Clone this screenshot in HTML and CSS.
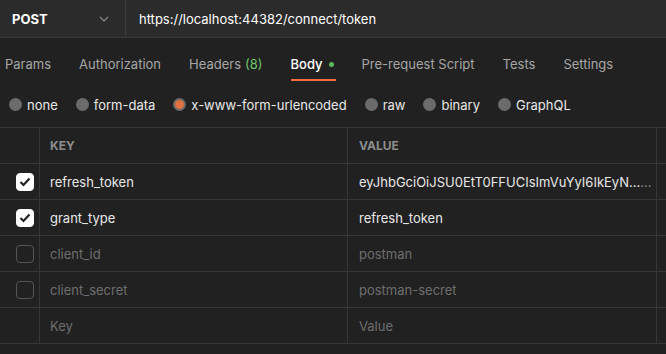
FILE: index.html
```html
<!DOCTYPE html>
<html>
<head>
<meta charset="utf-8">
<link rel="stylesheet" href="styles.css">
</head>
<body>
<div class="app">
  <div class="urlbar">
    <div class="method">
      <span class="method-name">POST</span>
      <svg class="chev" width="10" height="6" viewBox="0 0 10 6"><path d="M1 1l4 4 4-4" fill="none" stroke="#8a8a8a" stroke-width="1.2"/></svg>
    </div>
    <div class="url">https://localhost:44382/connect/token</div>
  </div>
  <div class="tabs">
    <span class="tab">Params</span>
    <span class="tab">Authorization</span>
    <span class="tab">Headers <span class="count">(8)</span></span>
    <span class="tab active">Body <span class="dot"></span></span>
    <span class="tab">Pre-request Script</span>
    <span class="tab">Tests</span>
    <span class="tab">Settings</span>
  </div>
  <div class="radios">
    <span class="radio"><span class="circle"></span>none</span>
    <span class="radio"><span class="circle"></span>form-data</span>
    <span class="radio"><span class="circle sel"></span>x-www-form-urlencoded</span>
    <span class="radio"><span class="circle"></span>raw</span>
    <span class="radio"><span class="circle"></span>binary</span>
    <span class="radio"><span class="circle"></span>GraphQL</span>
  </div>
  <div class="table">
    <div class="row head">
      <div class="c0"></div>
      <div class="c1">KEY</div>
      <div class="c2">VALUE</div>
      <div class="c3"></div>
    </div>
    <div class="row">
      <div class="c0"><span class="cb on"><svg width="12" height="10" viewBox="0 0 12 10"><path d="M1.5 5l3 3 6-6.5" fill="none" stroke="#212121" stroke-width="2.2"/></svg></span></div>
      <div class="c1">refresh_token</div>
      <div class="c2">eyJhbGciOiJSU0EtT0FFUCIsImVuYyI6IkEyN...<span class="dim">...</span></div>
      <div class="c3"></div>
    </div>
    <div class="row">
      <div class="c0"><span class="cb on"><svg width="12" height="10" viewBox="0 0 12 10"><path d="M1.5 5l3 3 6-6.5" fill="none" stroke="#212121" stroke-width="2.2"/></svg></span></div>
      <div class="c1">grant_type</div>
      <div class="c2">refresh_token</div>
      <div class="c3"></div>
    </div>
    <div class="row off">
      <div class="c0"><span class="cb"></span></div>
      <div class="c1">client_id</div>
      <div class="c2">postman</div>
      <div class="c3"></div>
    </div>
    <div class="row off">
      <div class="c0"><span class="cb"></span></div>
      <div class="c1">client_secret</div>
      <div class="c2">postman-secret</div>
      <div class="c3"></div>
    </div>
    <div class="row off">
      <div class="c0"></div>
      <div class="c1">Key</div>
      <div class="c2">Value</div>
      <div class="c3"></div>
    </div>
  </div>
</div>
</body>
</html>
```
FILE: styles.css
```css
html, body {
  margin: 0;
  padding: 0;
  background: #212121;
}
.app {
  width: 666px;
  height: 354px;
  overflow: hidden;
  font-family: Inter, "Noto Sans", sans-serif;
  font-size: 13px;
  color: #e8e8e8;
  background: #212121;
}
.urlbar {
  display: flex;
  height: 37px;
  background: #2b2b2b;
  border-bottom: 1px solid #3a3a3a;
}
.method {
  width: 126px;
  display: flex;
  align-items: center;
  justify-content: space-between;
  padding: 0 16px 0 12px;
  box-sizing: border-box;
  border-right: 1px solid #3a3a3a;
  border-bottom-left-radius: 4px;
}
.method-name {
  font-weight: 700;
  color: #ffffff;
}
.url {
  display: flex;
  align-items: center;
  padding-left: 13px;
  color: #ffffff;
}
.tabs {
  display: flex;
  height: 44px;
  padding-left: 5px;
  gap: 28px;
}
.tab {
  display: flex;
  align-items: center;
  color: #a6a6a6;
  padding-top: 8px;
  box-sizing: border-box;
  height: 44px;
  position: relative;
}
.tab .count {
  color: #6cc36c;
  margin-left: 4px;
}
.tab.active {
  color: #ffffff;
  font-weight: 500;
}
.tab.active::after {
  content: "";
  position: absolute;
  left: 0;
  right: -2px;
  bottom: 1px;
  height: 2px;
  background: #f26b3a;
}
.dot {
  width: 5px;
  height: 5px;
  border-radius: 50%;
  background: #5cb85c;
  margin-left: 6px;
}
.radios {
  display: flex;
  align-items: center;
  height: 45px;
  padding-left: 9px;
  gap: 18px;
}
.radio {
  display: flex;
  align-items: center;
  color: #e8e8e8;
}
.circle {
  width: 13px;
  height: 13px;
  border-radius: 50%;
  background: #6b6b6b;
  margin-right: 5px;
  box-sizing: border-box;
}
.circle.sel {
  background: #e07040;
  border: 2.5px solid #6b6b6b;
}
.table {
  border-top: 1px solid #363636;
}
.row {
  display: flex;
  height: 35px;
  border-bottom: 1px solid #363636;
  box-sizing: content-box;
}
.row > div {
  display: flex;
  align-items: center;
  box-sizing: border-box;
  white-space: nowrap;
  overflow: hidden;
}
.c0 {
  width: 40px;
  border-right: 1px solid #363636;
  padding-left: 16px;
}
.c1 {
  width: 308px;
  padding-left: 10px;
  border-right: 1px solid #363636;
}
.c2 {
  width: 309px;
  padding-left: 11px;
  border-right: 1px solid #363636;
}
.c3 {
  flex: 1;
}
.head .c1, .head .c2 {
  font-weight: 700;
  font-size: 12px;
  color: #8c8c8c;
}
.cb {
  width: 18px;
  height: 18px;
  border-radius: 4px;
  border: 1px solid #555555;
  box-sizing: border-box;
  display: flex;
  align-items: center;
  justify-content: center;
}
.cb.on {
  background: #ffffff;
  border-color: #ffffff;
}
.off .c1, .off .c2 {
  color: #6e6e6e;
}
.dim {
  color: #8a8a8a;
}
```
